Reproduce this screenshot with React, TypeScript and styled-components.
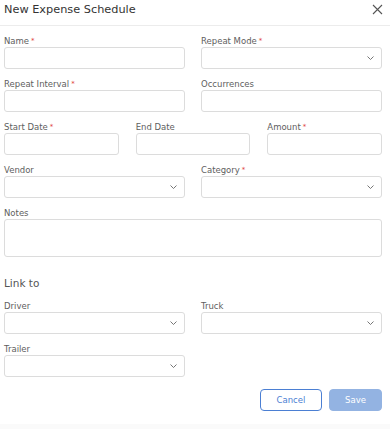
import React from 'react';
import styled, { createGlobalStyle } from 'styled-components';

const GlobalStyle = createGlobalStyle`
  body {
    margin: 0;
    background: #fff;
    font-family: "DejaVu Sans", "Open Sans", sans-serif;
  }
`;

const Dialog = styled.div`
  width: 390px;
  height: 429px;
  display: flex;
  flex-direction: column;
  background: #fff;
  border-bottom: 5px solid #fafafa;
  box-sizing: border-box;
`;

const Header = styled.div`
  height: 25px;
  display: flex;
  align-items: center;
  justify-content: space-between;
  padding: 0 7px 0 4px;
  border-bottom: 1px solid #ececec;
`;

const Title = styled.h1`
  margin: 0;
  font-size: 11.3px;
  font-weight: 400;
  color: #333;
  margin-top: -6px;
`;

const CloseButton = styled.button`
  border: 0;
  background: none;
  padding: 0;
  display: flex;
  margin-top: -6px;
`;

const Form = styled.div`
  display: flex;
  flex-direction: column;
  gap: 9px;
  padding: 9px 8px 0 4px;
`;

const Row = styled.div<{ $cols: number }>`
  display: grid;
  grid-template-columns: repeat(${p => p.$cols}, 1fr);
  column-gap: ${p => (p.$cols === 3 ? 17 : 16)}px;
`;

const Field = styled.div`
  display: flex;
  flex-direction: column;
`;

const Label = styled.label`
  font-size: 8.5px;
  line-height: 12px;
  color: #5e5e5e;
`;

const Required = styled.span`
  color: #e0413a;
  margin-left: 2px;
  font-size: 7px;
  vertical-align: top;
`;

const Box = styled.div<{ $tall?: boolean }>`
  height: ${p => (p.$tall ? 38 : 22)}px;
  box-sizing: border-box;
  border: 1px solid #dcdcdc;
  border-radius: 3px;
  display: flex;
  align-items: center;
  justify-content: flex-end;
  padding-right: 7px;
`;

const Section = styled.div`
  font-size: 10.5px;
  line-height: 14px;
  color: #555;
  margin: 10px 0 1px;
`;

const Actions = styled.div`
  display: flex;
  justify-content: flex-end;
  gap: 7px;
  margin-top: 3px;
`;

const Btn = styled.button<{ $primary?: boolean }>`
  height: 22px;
  width: ${p => (p.$primary ? 53 : 62)}px;
  box-sizing: border-box;
  border-radius: 4px;
  font-family: "DejaVu Sans", sans-serif;
  font-size: 8.5px;
  border: 1px solid ${p => (p.$primary ? '#93b3e2' : '#4b7fd3')};
  background: ${p => (p.$primary ? '#93b3e2' : '#fff')};
  color: ${p => (p.$primary ? '#fff' : '#4b7fd3')};
`;

const Chevron = () => (
  <svg width="7" height="4" viewBox="0 0 7 4" fill="none">
    <path d="M0.5 0.5L3.5 3.5L6.5 0.5" stroke="#666" strokeWidth="0.9" />
  </svg>
);

type FieldProps = { label: string; required?: boolean; select?: boolean; tall?: boolean };

const FormField = ({ label, required, select, tall }: FieldProps) => (
  <Field>
    <Label>
      {label}
      {required && <Required>*</Required>}
    </Label>
    <Box $tall={tall}>{select && <Chevron />}</Box>
  </Field>
);

const App = () => (
  <Dialog>
    <GlobalStyle />
    <Header>
      <Title>New Expense Schedule</Title>
      <CloseButton>
        <svg width="11" height="11" viewBox="0 0 11 11">
          <path d="M1 1L10 10M10 1L1 10" stroke="#555" strokeWidth="1.1" />
        </svg>
      </CloseButton>
    </Header>
    <Form>
      <Row $cols={2}>
        <FormField label="Name" required />
        <FormField label="Repeat Mode" required select />
      </Row>
      <Row $cols={2}>
        <FormField label="Repeat Interval" required />
        <FormField label="Occurrences" />
      </Row>
      <Row $cols={3}>
        <FormField label="Start Date" required />
        <FormField label="End Date" />
        <FormField label="Amount" required />
      </Row>
      <Row $cols={2}>
        <FormField label="Vendor" select />
        <FormField label="Category" required select />
      </Row>
      <Row $cols={1}>
        <FormField label="Notes" tall />
      </Row>
      <Section>Link to</Section>
      <Row $cols={2}>
        <FormField label="Driver" select />
        <FormField label="Truck" select />
      </Row>
      <Row $cols={2}>
        <FormField label="Trailer" select />
      </Row>
      <Actions>
        <Btn>Cancel</Btn>
        <Btn $primary>Save</Btn>
      </Actions>
    </Form>
  </Dialog>
);

export default App;
